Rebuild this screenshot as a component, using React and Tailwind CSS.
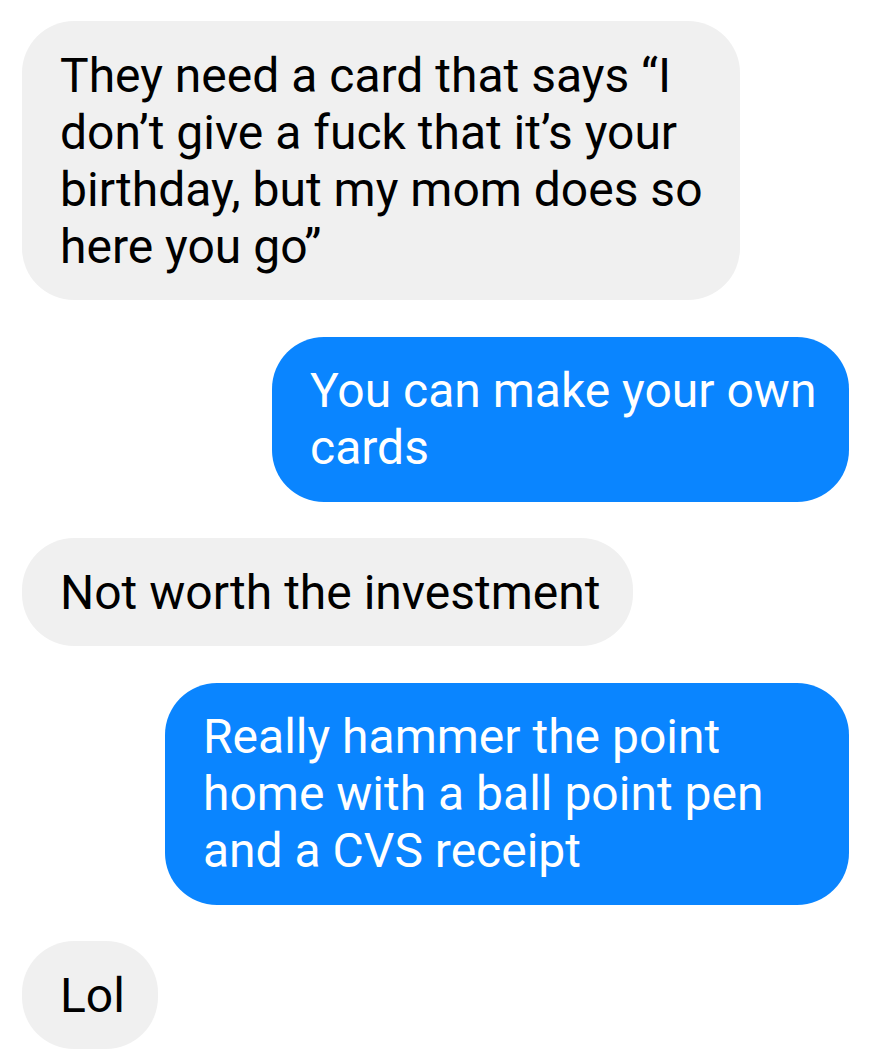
import React from "react";

function Bubble({ mine, width, children }) {
  return (
    <div className={`flex ${mine ? "justify-end pr-[38px]" : "justify-start pl-[22px]"}`}>
      <div
        className={`rounded-[52px] px-[38px] py-[25.5px] text-[48px] leading-[57px] whitespace-nowrap ${width} ${
          mine ? "bg-[#0a85ff] text-white" : "bg-[#f0f0f0] text-black"
        }`}
      >
        {children}
      </div>
    </div>
  );
}

export default function App() {
  return (
    <div
      className="w-[887px] h-[1050px] overflow-hidden bg-white pt-[21px] flex flex-col gap-[36.5px]"
      style={{ fontFamily: "Roboto, 'Noto Sans', sans-serif" }}
    >
      <Bubble width="w-[718px]">
        They need a card that says “I
        <br />
        don’t give a fuck that it’s your
        <br />
        birthday, but my mom does so
        <br />
        here you go”
      </Bubble>
      <Bubble mine width="w-[577px]">
        You can make your own
        <br />
        cards
      </Bubble>
      <Bubble width="w-[611px]">Not worth the investment</Bubble>
      <Bubble mine width="w-[684px]">
        Really hammer the point
        <br />
        home with a ball point pen
        <br />
        and a CVS receipt
      </Bubble>
      <Bubble width="w-[136px]">Lol</Bubble>
    </div>
  );
}
